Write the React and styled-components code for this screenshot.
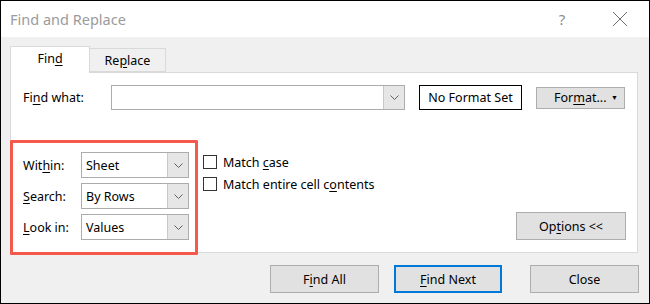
import React from 'react'
import styled, { createGlobalStyle } from 'styled-components'

const GlobalStyle = createGlobalStyle`
  html, body {
    margin: 0;
    padding: 0;
    background: #ffffff;
  }
  body {
    font-family: "Noto Sans", "Open Sans", Arial, sans-serif;
  }
`

const Window = styled.div`
  width: 650px;
  height: 304px;
  box-sizing: border-box;
  border: 1px solid #000;
  display: flex;
  flex-direction: column;
  font-size: 12.5px;
  color: #000;
`

const TitleBar = styled.div`
  height: 36px;
  background: #fff;
  display: flex;
  align-items: center;
  padding-left: 9px;
  flex-shrink: 0;
`

const Title = styled.div`
  font-size: 14.5px;
  color: #9b9b9b;
  margin-right: auto;
`

const Help = styled.div`
  font-size: 15px;
  color: #8c8c8c;
  width: 20px;
  text-align: center;
  margin-right: 40px;
`

const CloseX = styled.svg`
  width: 16px;
  height: 16px;
  margin-right: 21px;
`

const Body = styled.div`
  flex: 1;
  background: #f0f0f0;
  padding: 9px 11px 0 9px;
  display: flex;
  flex-direction: column;
`

const TabStrip = styled.div`
  display: flex;
  align-items: flex-end;
  height: 26px;
`

const Tab = styled.div`
  box-sizing: border-box;
  width: ${p => p.$w}px;
  height: ${p => (p.$active ? 27 : 24)}px;
  margin-bottom: ${p => (p.$active ? -1 : 0)}px;
  background: ${p => (p.$active ? '#fff' : '#f0f0f0')};
  border: 1px solid #d9d9d9;
  border-bottom: ${p => (p.$active ? 'none' : '1px solid #d9d9d9')};
  border-left: ${p => (p.$active ? '1px solid #d9d9d9' : 'none')};
  position: relative;
  z-index: ${p => (p.$active ? 1 : 0)};
  display: flex;
  align-items: center;
  justify-content: center;
  padding-bottom: ${p => (p.$active ? 3 : 0)}px;
`

const Panel = styled.div`
  box-sizing: border-box;
  width: 628px;
  height: 181px;
  background: #fff;
  border: 1px solid #d9d9d9;
  padding: 12px 11px 12px 12px;
  display: flex;
  flex-direction: column;
`

const FindRow = styled.div`
  display: flex;
  align-items: center;
  height: 25px;
`

const Label = styled.div`
  width: ${p => p.$w}px;
  flex-shrink: 0;
`

const Accel = styled.span`
  text-decoration: underline;
  text-underline-offset: 2px;
`

const Field = styled.div`
  box-sizing: border-box;
  width: ${p => p.$w}px;
  height: ${p => p.$h}px;
  background: #fff;
  border: 1px solid #acacac;
  display: flex;
  align-items: stretch;
`

const FieldText = styled.div`
  flex: 1;
  display: flex;
  align-items: center;
  padding-left: 4px;
`

const DropButton = styled.div`
  width: 20px;
  background: #e6e6e6;
  border-left: 1px solid #c9c9c9;
  display: flex;
  align-items: center;
  justify-content: center;
`

const NoFormat = styled.div`
  box-sizing: border-box;
  width: 103px;
  height: 25px;
  margin-left: 14px;
  border: 1px solid #000;
  background: #fff;
  display: flex;
  align-items: center;
  justify-content: center;
`

const Button = styled.div`
  box-sizing: border-box;
  width: ${p => p.$w}px;
  height: ${p => p.$h || 28}px;
  background: #e1e1e1;
  border: ${p => (p.$default ? '2px solid #0078d7' : '1px solid #adadad')};
  display: flex;
  align-items: center;
  justify-content: center;
  margin-left: ${p => p.$ml || 0}px;
  flex-shrink: 0;
`

const FormatButton = styled(Button)`
  margin-left: 14px;
  justify-content: flex-start;
  padding: 0 6px 0 17px;
`

const Caret = styled.span`
  margin-left: auto;
  font-size: 7px;
  color: #000;
`

const Lower = styled.div`
  display: flex;
  align-items: flex-start;
  margin-top: 42px;
  flex: 1;
`

const Group = styled.div`
  position: relative;
  display: flex;
  flex-direction: column;
  gap: 5px;

  &::before {
    content: '';
    position: absolute;
    left: -13px;
    top: -12px;
    right: -9px;
    bottom: -15px;
    border: 3px solid #f4594c;
    border-radius: 1px;
    pointer-events: none;
  }
`

const GroupRow = styled.div`
  display: flex;
  align-items: center;
  height: 26px;
`

const Checks = styled.div`
  display: flex;
  flex-direction: column;
  gap: 8px;
  margin-left: 14px;
  margin-top: 3px;
`

const CheckRow = styled.label`
  display: flex;
  align-items: center;
  gap: 6px;
  height: 14px;
`

const Box = styled.span`
  box-sizing: border-box;
  width: 14px;
  height: 14px;
  border: 1px solid #333;
  background: #fff;
`

const OptionsButton = styled(Button)`
  margin-left: auto;
  align-self: flex-end;
`

const Footer = styled.div`
  display: flex;
  justify-content: flex-end;
  gap: 15px;
  padding-top: 12px;
  margin-right: -1px;
`

function Chevron() {
  return (
    <svg width="9" height="5" viewBox="0 0 9 5">
      <path d="M0.5 0.5 L4.5 4.5 L8.5 0.5" fill="none" stroke="#606060" strokeWidth="1" />
    </svg>
  )
}

function Select({ value, w }) {
  return (
    <Field $w={w} $h={26}>
      <FieldText>{value}</FieldText>
      <DropButton>
        <Chevron />
      </DropButton>
    </Field>
  )
}

export default function App() {
  return (
    <>
      <GlobalStyle />
      <Window>
        <TitleBar>
          <Title>Find and Replace</Title>
          <Help>?</Help>
          <CloseX viewBox="0 0 16 16">
            <path d="M1 1 L15 15 M15 1 L1 15" stroke="#6e6e6e" strokeWidth="1" />
          </CloseX>
        </TitleBar>
        <Body>
          <TabStrip>
            <Tab $active $w={80}>
              <span>Fin<Accel>d</Accel></span>
            </Tab>
            <Tab $w={76}>
              <span>Re<Accel>p</Accel>lace</span>
            </Tab>
          </TabStrip>
          <Panel>
            <FindRow>
              <Label $w={88}>Fi<Accel>n</Accel>d what:</Label>
              <Field $w={294} $h={25}>
                <FieldText />
                <DropButton>
                  <Chevron />
                </DropButton>
              </Field>
              <NoFormat>No Format Set</NoFormat>
              <FormatButton $w={89} $h={22}>
                <span>For<Accel>m</Accel>at...</span>
                <Caret>▼</Caret>
              </FormatButton>
            </FindRow>
            <Lower>
              <Group>
                <GroupRow>
                  <Label $w={58}>Wit<Accel>h</Accel>in:</Label>
                  <Select value="Sheet" w={108} />
                </GroupRow>
                <GroupRow>
                  <Label $w={58}><Accel>S</Accel>earch:</Label>
                  <Select value="By Rows" w={108} />
                </GroupRow>
                <GroupRow>
                  <Label $w={58}><Accel>L</Accel>ook in:</Label>
                  <Select value="Values" w={108} />
                </GroupRow>
              </Group>
              <Checks>
                <CheckRow>
                  <Box />
                  <span>Match <Accel>c</Accel>ase</span>
                </CheckRow>
                <CheckRow>
                  <Box />
                  <span>Match entire cell c<Accel>o</Accel>ntents</span>
                </CheckRow>
              </Checks>
              <OptionsButton $w={110}>
                <span>Op<Accel>t</Accel>ions &lt;&lt;</span>
              </OptionsButton>
            </Lower>
          </Panel>
          <Footer>
            <Button $w={109}>
              <span>F<Accel>i</Accel>nd All</span>
            </Button>
            <Button $w={108} $default>
              <span><Accel>F</Accel>ind Next</span>
            </Button>
            <Button $w={109} $ml={13}>
              <span>Close</span>
            </Button>
          </Footer>
        </Body>
      </Window>
    </>
  )
}
